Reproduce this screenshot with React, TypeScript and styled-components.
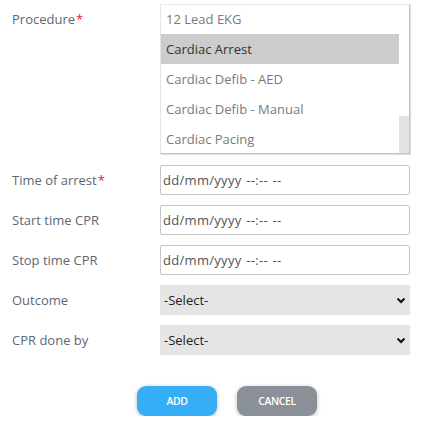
import React from 'react';
import styled, { createGlobalStyle } from 'styled-components';

const GlobalStyle = createGlobalStyle`
  html, body {
    margin: 0;
    padding: 0;
    background: #ffffff;
    font-family: "Open Sans", "Noto Sans", sans-serif;
  }
`;

const Form = styled.div`
  width: 423px;
  padding: 4px 13px 0 12px;
  box-sizing: border-box;
  display: flex;
  flex-direction: column;
`;

const Row = styled.div<{ $gap?: number }>`
  display: grid;
  grid-template-columns: 148px 250px;
  align-items: start;
  margin-top: ${(p) => p.$gap ?? 10}px;
  &:first-child {
    margin-top: 0;
  }
`;

const Label = styled.div`
  height: 30px;
  display: flex;
  align-items: center;
  font-size: 13px;
  color: #5d6873;
`;

const Req = styled.span`
  color: #e2231a;
  margin-left: 1px;
`;

const ListBox = styled.div`
  height: 150px;
  box-sizing: border-box;
  border-top: 1px solid #ececec;
  border-left: 1px solid #e4e4e4;
  border-right: 1px solid #c4c4c4;
  border-bottom: 1px solid #c4c4c4;
  box-shadow: 1px 1px 1px rgba(0, 0, 0, 0.12);
  display: grid;
  grid-template-columns: 1fr 10px;
  overflow: hidden;
`;

const Options = styled.div`
  display: flex;
  flex-direction: column;
  margin-top: -1px;
`;

const Option = styled.div<{ $selected?: boolean }>`
  height: 30px;
  flex: none;
  display: flex;
  align-items: center;
  padding-left: 5px;
  font-size: 13px;
  color: ${(p) => (p.$selected ? '#333333' : '#7a7a7a')};
  background: ${(p) => (p.$selected ? '#cccccc' : 'transparent')};
`;

const Track = styled.div`
  display: flex;
  flex-direction: column;
  justify-content: flex-end;
`;

const Thumb = styled.div`
  height: 38px;
  background: #e3e3e3;
`;

const DateInput = styled.div`
  height: 30px;
  box-sizing: border-box;
  border: 1px solid #c6c6c6;
  border-radius: 2px;
  display: flex;
  align-items: center;
  padding-left: 2px;
  font-size: 13px;
  letter-spacing: 0.3px;
  word-spacing: 1px;
  color: #555555;
`;

const Select = styled.div`
  height: 30px;
  background: #e5e5e5;
  display: flex;
  align-items: center;
  justify-content: space-between;
  padding: 0 4px 0 4px;
  font-size: 13px;
  color: #222222;
`;

const Buttons = styled.div`
  display: flex;
  justify-content: center;
  gap: 20px;
  margin-top: 31px;
  padding-left: 32px;
`;

const Button = styled.button<{ $variant: 'primary' | 'muted' }>`
  width: 80px;
  height: 30px;
  border: none;
  border-radius: 9px;
  font-family: "Open Sans", "Noto Sans", sans-serif;
  font-size: 10.5px;
  font-weight: 600;
  letter-spacing: -0.4px;
  color: #ffffff;
  background: ${(p) => (p.$variant === 'primary' ? '#35aef6' : '#8a9097')};
  box-shadow: 0 1px 4px rgba(0, 0, 0, 0.28);
`;

const Chevron = () => (
  <svg width="10" height="7" viewBox="0 0 10 7">
    <path d="M1.5 1.5 L5 5 L8.5 1.5" fill="none" stroke="#111" strokeWidth="2" />
  </svg>
);

const procedures = ['12 Lead EKG', 'Cardiac Arrest', 'Cardiac Defib - AED', 'Cardiac Defib - Manual', 'Cardiac Pacing'];

export default function App() {
  return (
    <>
      <GlobalStyle />
      <Form>
        <Row>
          <Label>
            Procedure<Req>*</Req>
          </Label>
          <ListBox>
            <Options>
              {procedures.map((p) => (
                <Option key={p} $selected={p === 'Cardiac Arrest'}>
                  {p}
                </Option>
              ))}
            </Options>
            <Track>
              <Thumb />
            </Track>
          </ListBox>
        </Row>
        <Row $gap={11}>
          <Label>
            Time of arrest<Req>*</Req>
          </Label>
          <DateInput>dd/mm/yyyy --:-- --</DateInput>
        </Row>
        <Row>
          <Label>Start time CPR</Label>
          <DateInput>dd/mm/yyyy --:-- --</DateInput>
        </Row>
        <Row>
          <Label>Stop time CPR</Label>
          <DateInput>dd/mm/yyyy --:-- --</DateInput>
        </Row>
        <Row>
          <Label>Outcome</Label>
          <Select>
            -Select-
            <Chevron />
          </Select>
        </Row>
        <Row>
          <Label>CPR done by</Label>
          <Select>
            -Select-
            <Chevron />
          </Select>
        </Row>
        <Buttons>
          <Button $variant="primary">ADD</Button>
          <Button $variant="muted">CANCEL</Button>
        </Buttons>
      </Form>
    </>
  );
}
